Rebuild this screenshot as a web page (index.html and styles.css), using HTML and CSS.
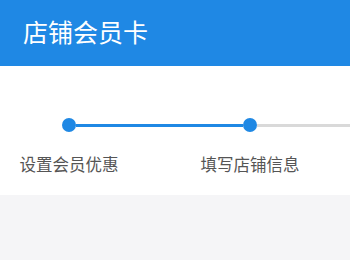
FILE: index.html
```html
<!DOCTYPE html>
<html lang="zh">
<head>
<meta charset="utf-8">
<link rel="stylesheet" href="styles.css">
</head>
<body>
<header class="appbar"><h1 class="title">店铺会员卡</h1></header>
<section class="steps">
  <div class="track">
    <span class="dot"></span>
    <span class="seg seg-done"></span>
    <span class="dot"></span>
    <span class="seg seg-todo"></span>
  </div>
  <div class="labels">
    <span class="label">设置会员优惠</span>
    <span class="label">填写店铺信息</span>
  </div>
</section>
<main class="rest"></main>
</body>
</html>
```
FILE: styles.css
```css
html, body {
  margin: 0;
  padding: 0;
  width: 350px;
  height: 260px;
  overflow: hidden;
  background: #f5f5f7;
  font-family: "Noto Sans CJK SC", "Noto Sans", sans-serif;
}
.appbar {
  height: 66px;
  background: #1f88e4;
  display: flex;
  align-items: center;
  padding-left: 23px;
  box-sizing: border-box;
}
.title {
  margin: 0;
  color: #ffffff;
  font-size: 25px;
  font-weight: 400;
  line-height: 1;
  padding-bottom: 4px;
}
.steps {
  background: #ffffff;
  height: 129px;
  padding-top: 52px;
  box-sizing: border-box;
  overflow: hidden;
}
.track {
  display: flex;
  align-items: center;
  padding-left: 62px;
  height: 14px;
}
.dot {
  flex: none;
  width: 14px;
  height: 14px;
  border-radius: 50%;
  background: #1f88e4;
}
.seg {
  height: 3px;
}
.seg-done {
  flex: none;
  width: 167px;
  background: #1f88e4;
}
.seg-todo {
  flex: 1;
  background: #d9d9d9;
}
.labels {
  display: flex;
  gap: 81px;
  padding-left: 19px;
  margin-top: 22px;
  white-space: nowrap;
}
.label {
  flex: none;
  width: 100px;
  text-align: center;
  font-size: 16.5px;
  line-height: 20px;
  color: #555555;
}
```
